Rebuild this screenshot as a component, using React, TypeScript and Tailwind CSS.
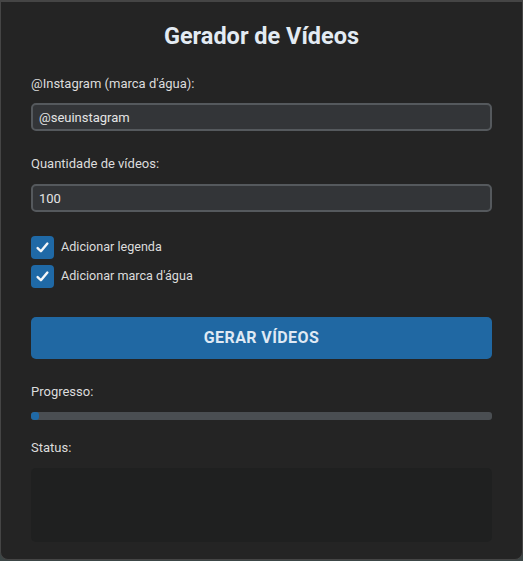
import React from 'react';

const font = { fontFamily: 'Roboto, "Liberation Sans", sans-serif' };

// Blue checkbox with a white tick, always on
const CheckRow: React.FC<{ label: string }> = ({ label }) => (
  <label className="flex items-center gap-[7px] h-[23px]">
    <span className="w-[23px] h-[23px] rounded-[4px] bg-[#1f69a6] flex items-center justify-center">
      <svg width="15" height="15" viewBox="0 0 16 16" fill="none">
        <path d="M2.8 8.6 L6.3 12 L13.2 3.8" stroke="#f4f6f8" strokeWidth="2.6" strokeLinecap="round" strokeLinejoin="round" />
      </svg>
    </span>
    <span className="text-[12.6px] text-[#dcdcdc]">{label}</span>
  </label>
);

export default function App() {
  const progress = 1.8;

  return (
    <div className="min-h-[561px] bg-[#3c4646]" style={font}>
      <div className="h-[560px] bg-[#242424] border border-t-2 border-[#454545] rounded-b-[8px] px-[30px] pt-[20px] flex flex-col">
        <h1 className="text-[23.5px] leading-[28px] font-bold text-center text-[#e3ebf3]">Gerador de Vídeos</h1>

        <div className="mt-[26px] text-[13px] leading-[16px] text-[#dcdcdc]">@Instagram (marca d'água):</div>
        <input
          className="mt-[11px] h-[28px] w-full rounded-[5px] border-2 border-[#55595d] bg-[#333538] px-[6px] text-[13px] text-[#e4e4e4] outline-none"
          defaultValue="@seuinstagram"
        />

        <div className="mt-[25px] text-[13px] leading-[16px] text-[#dcdcdc]">Quantidade de vídeos:</div>
        <input
          className="mt-[12px] h-[28px] w-full rounded-[5px] border-2 border-[#55595d] bg-[#333538] px-[6px] text-[13px] text-[#e4e4e4] outline-none"
          defaultValue="100"
        />

        <div className="mt-[24px] flex flex-col gap-[6px]">
          <CheckRow label="Adicionar legenda" />
          <CheckRow label="Adicionar marca d'água" />
        </div>

        <button className="mt-[29px] h-[42px] w-full rounded-[5px] bg-[#2068a3] text-[16px] font-bold tracking-[0.4px] text-[#dfe9f4]">
          GERAR VÍDEOS
        </button>

        <div className="mt-[25px] text-[13px] leading-[16px] text-[#dcdcdc]">Progresso:</div>
        <div className="mt-[12px] h-[8px] w-full rounded-[3px] bg-[#4a4e52] overflow-hidden">
          <div className="h-full rounded-[3px] bg-[#1f69a6]" style={{ width: `${progress}%` }} />
        </div>

        <div className="mt-[20px] text-[13px] leading-[16px] text-[#dcdcdc]">Status:</div>
        <div className="mt-[12px] h-[74px] w-full rounded-[5px] bg-[#1f2020]" />
      </div>
    </div>
  );
}
